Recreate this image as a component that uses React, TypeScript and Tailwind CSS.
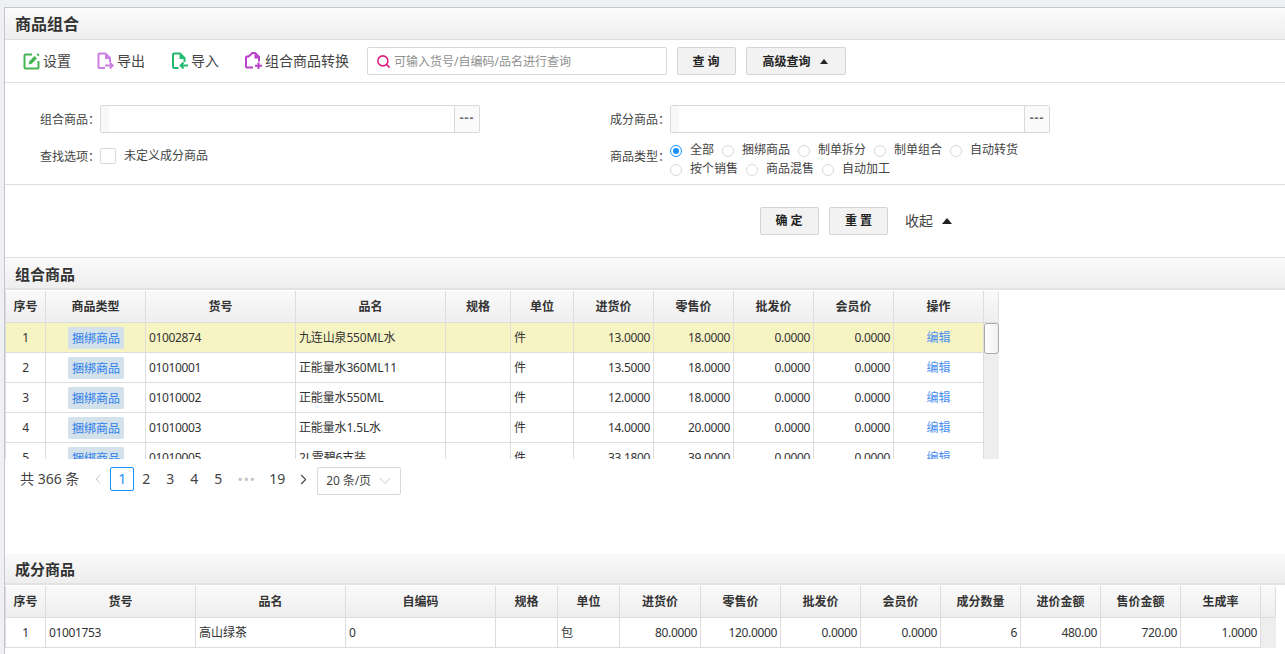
import { ChevronDown, ChevronLeft, ChevronRight, Search } from "lucide-react"

const FONT = "font-['Noto_Sans','Noto_Sans_CJK_SC',sans-serif]"

type Col = { title: string; width: number; align?: "left" | "right" | "center" }

const mainCols: Col[] = [
  { title: "序号", width: 40, align: "center" },
  { title: "商品类型", width: 100, align: "center" },
  { title: "货号", width: 150 },
  { title: "品名", width: 150 },
  { title: "规格", width: 65 },
  { title: "单位", width: 63 },
  { title: "进货价", width: 80, align: "right" },
  { title: "零售价", width: 80, align: "right" },
  { title: "批发价", width: 80, align: "right" },
  { title: "会员价", width: 80, align: "right" },
  { title: "操作", width: 90, align: "center" },
]

const mainRows = [
  ["1", "捆绑商品", "01002874", "九连山泉550ML水", "", "件", "13.0000", "18.0000", "0.0000", "0.0000", "编辑"],
  ["2", "捆绑商品", "01010001", "正能量水360ML11", "", "件", "13.5000", "18.0000", "0.0000", "0.0000", "编辑"],
  ["3", "捆绑商品", "01010002", "正能量水550ML", "", "件", "12.0000", "18.0000", "0.0000", "0.0000", "编辑"],
  ["4", "捆绑商品", "01010003", "正能量水1.5L水", "", "件", "14.0000", "20.0000", "0.0000", "0.0000", "编辑"],
  ["5", "捆绑商品", "01010005", "2L雪碧6支装", "", "件", "33.1800", "39.0000", "0.0000", "0.0000", "编辑"],
]

const partCols: Col[] = [
  { title: "序号", width: 40, align: "center" },
  { title: "货号", width: 150 },
  { title: "品名", width: 150 },
  { title: "自编码", width: 150 },
  { title: "规格", width: 62 },
  { title: "单位", width: 62 },
  { title: "进货价", width: 81, align: "right" },
  { title: "零售价", width: 80, align: "right" },
  { title: "批发价", width: 80, align: "right" },
  { title: "会员价", width: 80, align: "right" },
  { title: "成分数量", width: 80, align: "right" },
  { title: "进价金额", width: 80, align: "right" },
  { title: "售价金额", width: 80, align: "right" },
  { title: "生成率", width: 80, align: "right" },
]

const partRows = [
  ["1", "01001753", "高山绿茶", "0", "", "包", "80.0000", "120.0000", "0.0000", "0.0000", "6", "480.00", "720.00", "1.0000"],
]

function SettingIcon() {
  return (
    <svg width="18" height="18" viewBox="0 0 18 18" fill="none">
      <path d="M9 2.500H2.500a1 1 0 0 0-1 1v12a1 1 0 0 0 1 1h12a1 1 0 0 0 1-1V9" stroke="#43b653" strokeWidth="2" />
      <path d="M5.500 12.500 6.300 9.300l5.200-5.200 2.400 2.400-5.200 5.200z" fill="#43b653" />
      <path d="m13.500 2.400 1.200-1.200 1.800 1.800-1.200 1.200z" fill="#43b653" />
    </svg>
  )
}

function ExportIcon() {
  return (
    <svg width="18" height="18" viewBox="0 0 18 18" fill="none">
      <path d="M8 16H2.500a1 1 0 0 1-1-1V2.500a1 1 0 0 1 1-1h6l4.500 4.500v4" stroke="#cc7fe0" strokeWidth="2" />
      <path d="M8 2v5h5z" fill="#cc7fe0" />
      <path d="M8 13.500h7.500M12.800 10.500l3 3-3 3" stroke="#cc7fe0" strokeWidth="1.800" />
    </svg>
  )
}

function ImportIcon() {
  return (
    <svg width="18" height="18" viewBox="0 0 18 18" fill="none">
      <path d="M7.500 16H3a1 1 0 0 1-1-1V2.500a1 1 0 0 1 1-1h6l4.500 4.500v4" stroke="#1fbb70" strokeWidth="2" />
      <path d="M8.500 2v5h5z" fill="#1fbb70" />
      <path d="M17 13.500H9.500M12.500 10.500l-3 3 3 3" stroke="#1fbb70" strokeWidth="1.800" />
    </svg>
  )
}

function ConvertIcon() {
  return (
    <svg width="18" height="18" viewBox="0 0 18 18" fill="none">
      <path d="M8 15.500H2a1 1 0 0 1-1-1V5.500a1 1 0 0 1 1-1h1.500l4-3.500h2.500l4 4v4.500" stroke="#b83dc8" strokeWidth="2" />
      <path d="M9.500 2v4.500h5z" fill="#b83dc8" />
      <path d="M13.500 10.500v6.500M10 13.700h7" stroke="#b83dc8" strokeWidth="2" />
    </svg>
  )
}

function Tool({ icon, label, className }: { icon: React.ReactNode; label: string; className: string }) {
  return (
    <div className={`flex items-center gap-[2px] text-[14px] text-[#444] ${className}`}>
      {icon}
      <span className="-mt-[1px]">{label}</span>
    </div>
  )
}

function GrayButton({ children, className }: { children: React.ReactNode; className: string }) {
  return (
    <button className={`flex h-[28px] items-center justify-center rounded-[2px] border border-[#d4d4d4] bg-[#f2f2f2] pt-[1px] text-[12px] font-bold text-[#222] ${className}`}>
      {children}
    </button>
  )
}

function Caret() {
  return <span className="h-0 w-0 border-x-[4px] border-b-[5px] border-x-transparent border-b-[#222]" />
}

function Picker({ className }: { className: string }) {
  return (
    <div className={`flex h-[28px] w-[380px] rounded-[2px] border border-[#d9d9d9] ${className}`}>
      <div className="w-[8px] bg-[#f8f8f8]" />
      <div className="flex-1" />
      <div className="flex w-[25px] items-center justify-center border-l border-[#d9d9d9] bg-[#fafafa] pb-[2px] text-[12px] font-bold leading-none tracking-[1px] text-[#666]">
        ---
      </div>
    </div>
  )
}

function Radio({ label, checked }: { label: string; checked?: boolean }) {
  return (
    <div className="flex h-[19px] items-center">
      {checked ? (
        <span className="flex h-[12px] w-[12px] items-center justify-center rounded-full border border-[#1890ff]">
          <span className="h-[6px] w-[6px] rounded-full bg-[#1890ff]" />
        </span>
      ) : (
        <span className="h-[12px] w-[12px] rounded-full border border-[#d9d9d9]" />
      )}
      <span className="mx-[8px] -mt-[1px] text-[12px] text-[#444]">{label}</span>
    </div>
  )
}

function SectionTitle({ title }: { title: string }) {
  return (
    <div className="flex h-[32px] items-center border-b-2 border-[#e2e2e2] bg-gradient-to-b from-[#fafafa] to-[#eeeeee] pl-[10px] pt-[2px] text-[15px] font-bold text-[#333]">
      {title}
    </div>
  )
}

function HeaderCells({ cols }: { cols: Col[] }) {
  return (
    <div className="flex h-[32px] border-b border-[#dddddd]">
      {cols.map((c) => (
        <div
          key={c.title}
          style={{ width: c.width }}
          className="flex shrink-0 items-center justify-center border-r border-[#dddddd] bg-gradient-to-b from-[#fafafa] to-[#eeeeee] text-[12px] font-bold text-[#333]"
        >
          {c.title}
        </div>
      ))}
      <div className="w-[15px] shrink-0 rounded-tr-[3px] border-r border-[#dddddd] bg-gradient-to-b from-[#fafafa] to-[#eeeeee]" />
    </div>
  )
}

function Cell({ col, value, children }: { col: Col; value: string; children?: React.ReactNode }) {
  const align = col.align === "right" ? "justify-end" : col.align === "center" ? "justify-center" : "justify-start"
  // latin digits run wider here than in the original font, so pull them in a little
  const hasLatin = /[0-9A-Z]/.test(value)
  const isLatin = /^[\x00-\x7f]+$/.test(value)
  const tracking = isLatin ? "tracking-[-0.35px]" : hasLatin ? "tracking-[-0.15px]" : ""
  return (
    <div
      style={{ width: col.width }}
      className={`flex h-full shrink-0 items-center overflow-hidden whitespace-nowrap border-b border-r border-[#dddddd] px-[3px] text-[12px] text-[#333] ${align}`}
    >
      {children ?? <span className={`mt-[1px] ${tracking}`}>{value}</span>}
    </div>
  )
}

export default function App() {
  return (
    <div className={`h-[654px] w-[1285px] overflow-hidden bg-[#eef0f4] pt-[7px] ${FONT}`}>
      <div className="ml-[4px] h-full border-l border-t border-[#c4c6cb] bg-white">
        <div className="flex h-[32px] items-center border-b border-[#dedede] bg-gradient-to-b from-[#fbfbfb] to-[#eeeeee] pl-[10px] text-[16px] font-bold text-[#333]">
          商品组合
        </div>

        <div className="flex h-[43px] items-center border-b border-[#dedede]">
          <Tool className="ml-[18px]" icon={<SettingIcon />} label="设置" />
          <Tool className="ml-[26px]" icon={<ExportIcon />} label="导出" />
          <Tool className="ml-[26px]" icon={<ImportIcon />} label="导入" />
          <Tool className="ml-[26px]" icon={<ConvertIcon />} label="组合商品转换" />
          <div className="ml-[18px] flex h-[28px] w-[300px] items-center rounded-[2px] border border-[#d9d9d9] pl-[8px]">
            <Search size={15} color="#e0207f" strokeWidth={2.5} />
            <span className="ml-[3px] pt-[1px] text-[12px] text-[#8f8f8f]">可输入货号/自编码/品名进行查询</span>
          </div>
          <GrayButton className="ml-[10px] w-[59px] pl-[2px] tracking-[3px]">查询</GrayButton>
          <GrayButton className="ml-[10px] w-[100px] gap-[9px] pr-[2px]">
            高级查询
            <Caret />
          </GrayButton>
        </div>

        <div className="h-[102px] border-b border-[#dedede] pt-[22px]">
          <div className="flex">
            <div className="flex h-[28px] w-[95px] shrink-0 items-center justify-end pt-[1px] text-[12px] text-[#444]">组合商品：</div>
            <Picker className="shrink-0" />
            <div className="ml-[35px] flex h-[28px] w-[155px] shrink-0 items-center justify-end pt-[1px] text-[12px] text-[#444]">成分商品：</div>
            <Picker className="shrink-0" />
          </div>
          <div className="mt-[15px] flex">
            <div className="flex h-[16px] w-[95px] shrink-0 items-center justify-end pt-[1px] text-[12px] text-[#444]">查找选项：</div>
            <span className="h-[16px] w-[16px] shrink-0 rounded-[2px] border border-[#d9d9d9]" />
            <span className="ml-[8px] flex h-[16px] w-[431px] shrink-0 items-center text-[12px] text-[#444]">未定义成分商品</span>
            <div className="flex h-[16px] w-[115px] shrink-0 items-center justify-end pt-[2px] text-[12px] text-[#444]">商品类型：</div>
            <div className="-mt-[7px] w-[380px] shrink-0">
              <div className="flex">
                <Radio label="全部" checked />
                <Radio label="捆绑商品" />
                <Radio label="制单拆分" />
                <Radio label="制单组合" />
                <Radio label="自动转货" />
              </div>
              <div className="flex">
                <Radio label="按个销售" />
                <Radio label="商品混售" />
                <Radio label="自动加工" />
              </div>
            </div>
          </div>
        </div>

        <div className="flex h-[73px] items-center border-b border-[#dedede] pb-[1px] pl-[755px]">
          <GrayButton className="w-[59px] pl-[2px] tracking-[3px]">确定</GrayButton>
          <GrayButton className="ml-[10px] w-[59px] pl-[3px] tracking-[3px]">重置</GrayButton>
          <span className="ml-[17px] text-[14px] text-[#444]">收起</span>
          <span className="ml-[9px]">
            <span className="block h-0 w-0 border-x-[5px] border-b-[6px] border-x-transparent border-b-[#222]" />
          </span>
        </div>

        <SectionTitle title="组合商品" />

        <div className="mt-[1px] h-[168px] w-[994px] overflow-hidden border-l border-[#dddddd]">
          <HeaderCells cols={mainCols} />
          {mainRows.map((row, i) => (
            <div key={row[0]} className={`flex h-[30px] ${i === 0 ? "bg-[#f7f4c4]" : ""}`}>
              {mainCols.map((c, j) => (
                <Cell key={c.title} col={c} value={row[j]}>
                  {j === 1 ? (
                    <span className="ml-[1px] rounded-[2px] bg-[#d3e1ea] px-[4px] pb-[1px] pt-[3px] text-[#2f80ed]">{row[j]}</span>
                  ) : j === 10 ? (
                    <span className="mt-[1px] text-[#4a90f0]">{row[j]}</span>
                  ) : undefined}
                </Cell>
              ))}
              <div className="relative w-[15px] shrink-0 bg-[#eeeeee]">
                {i === 0 && (
                  <div className="absolute inset-x-0 top-0 z-10 h-[31px] rounded-[3px] border border-[#aaaaaa] bg-gradient-to-r from-[#ffffff] to-[#f0f0f0]" />
                )}
              </div>
            </div>
          ))}
        </div>

        <div className="mt-[8px] flex h-[28px] items-start pl-[15px] text-[14px] text-[#444]">
          <span className="flex h-[24px] items-center pb-[2px]">共 366 条</span>
          <ChevronLeft className="ml-[11px] mt-[4px]" size={16} color="#c8c8c8" strokeWidth={1.5} />
          <span className="ml-[4px] flex h-[24px] w-[24px] items-center justify-center rounded-[2px] border border-[#1890ff] pb-[2px] text-[#1890ff]">1</span>
          <span className="flex h-[24px] w-[24px] items-center justify-center pb-[2px]">2</span>
          <span className="flex h-[24px] w-[24px] items-center justify-center pb-[2px]">3</span>
          <span className="flex h-[24px] w-[24px] items-center justify-center pb-[2px]">4</span>
          <span className="flex h-[24px] w-[24px] items-center justify-center pb-[2px]">5</span>
          <span className="ml-[2px] flex h-[24px] w-[30px] items-center justify-center text-[11px] font-bold tracking-[2px] text-[#c4c4c4]">•••</span>
          <span className="ml-[2px] flex h-[24px] w-[26px] items-center justify-center pb-[2px]">19</span>
          <ChevronRight className="ml-[5px] mt-[4px]" size={17} color="#444" strokeWidth={1.5} />
          <div className="ml-[5px] flex h-[28px] w-[84px] items-center justify-between rounded-[2px] border border-[#d9d9d9] pb-[1px] pl-[8px] pr-[5px] text-[12px]">
            <span className="tracking-[-0.1px]">20 条/页</span>
            <ChevronDown size={20} color="#c8c8c8" strokeWidth={1.2} />
          </div>
        </div>

        <div className="mt-[58px]">
          <SectionTitle title="成分商品" />
        </div>

        <div className="mt-[1px] w-[1271px] border-l border-[#dddddd]">
          <HeaderCells cols={partCols} />
          {partRows.map((row) => (
            <div key={row[0]} className="flex h-[30px]">
              {partCols.map((c, j) => (
                <Cell key={c.title} col={c} value={row[j]} />
              ))}
              <div className="w-[15px] shrink-0 bg-[#eeeeee]" />
            </div>
          ))}
        </div>
      </div>
    </div>
  )
}
